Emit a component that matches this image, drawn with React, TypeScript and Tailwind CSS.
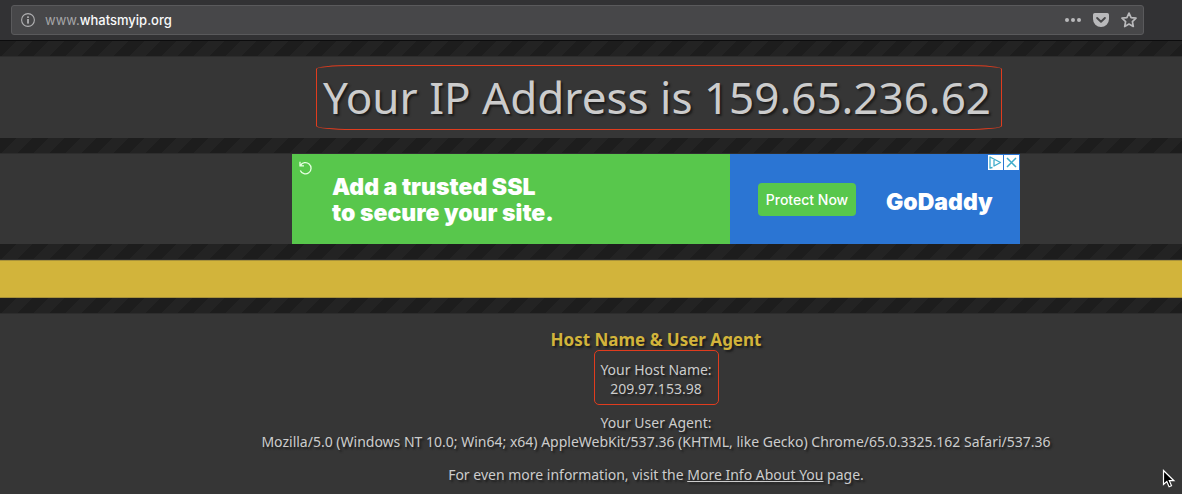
import React from "react";

function StripeBar({ first = false }: { first?: boolean }) {
  return (
    <div
      className={
        "border-b border-[#2d2d2d] bg-[linear-gradient(135deg,#1d1d1d_25%,#232323_25%,#232323_50%,#1d1d1d_50%,#1d1d1d_75%,#232323_75%)] bg-[size:32px_32px] " +
        (first ? "h-[17px] border-t border-t-[#0c0c0d]" : "h-4")
      }
    />
  );
}

function UrlBar() {
  return (
    <header className="h-10 bg-[#323234] pt-[5px] pl-[11px] pr-[38px]">
      <div className="flex h-[30px] items-center rounded-[3px] border border-[#5a5a5c] bg-[#474749] pl-[9px] pr-[6px] font-['Inter','Liberation_Sans',sans-serif]">
        <button aria-label="Site information" className="mr-[10px] block">
          <svg width="14" height="14" viewBox="0 0 14 14" fill="none">
            <circle cx="7" cy="7" r="6.4" stroke="#b1b1b3" strokeWidth="1.1" />
            <rect x="6.1" y="6" width="1.8" height="4.6" fill="#b1b1b3" />
            <rect x="6.1" y="3.3" width="1.8" height="1.8" rx=".5" fill="#b1b1b3" />
          </svg>
        </button>
        <p className="grow text-left text-[13px] text-[#a5a5a7]">
          www.<span className="font-medium text-[#f9f9fa]">whatsmyip.org</span>
        </p>
        <button aria-label="Page actions" className="mr-3 block">
          <svg width="16" height="16" viewBox="0 0 16 16" fill="#b9b9bb">
            <circle cx="2" cy="8" r="2" />
            <circle cx="8" cy="8" r="2" />
            <circle cx="14" cy="8" r="2" />
          </svg>
        </button>
        <button aria-label="Save to Pocket" className="mr-3 block">
          <svg width="16" height="16" viewBox="0 0 16 16">
            <path d="M1.8 1h12.4A1.8 1.8 0 0 1 16 2.8V7A8 8 0 0 1 0 7V2.8A1.8 1.8 0 0 1 1.8 1Z" fill="#b9b9bb" />
            <path d="m4.1 6 3.9 3.7L11.900 6" fill="none" stroke="#474749" strokeWidth="1.9" strokeLinecap="round" strokeLinejoin="round" />
          </svg>
        </button>
        <button aria-label="Bookmark this page" className="block">
          <svg width="16" height="16" viewBox="0 0 16 16" fill="none" stroke="#b9b9bb" strokeWidth="1.7" strokeLinejoin="round">
            <path d="m8 1.100 2.100 4.500 4.900.6-3.600 3.400.9 4.900L8 12.100l-4.300 2.400.9-4.900L1 6.200l4.900-.6Z" />
          </svg>
        </button>
      </div>
    </header>
  );
}

function AdBanner() {
  return (
    <div className="relative flex h-[90px] w-[728px] font-['Inter','Liberation_Sans',sans-serif] text-white [text-shadow:none]">
      <div className="flex w-[438px] items-start bg-[#58c74c]">
        <button aria-label="Replay" className="mt-[7px] ml-[7px] block">
          <svg width="13" height="14" viewBox="0 0 13 14" fill="none" stroke="#e6ffe2" strokeWidth="1.3">
            <path d="M1.500 4.600A5.600 5.600 0 1 1 1.300 9.400M1 .8v4h4" />
          </svg>
        </button>
        <p className="mt-5 ml-5 text-left text-[23px] leading-[26px] font-black whitespace-nowrap">
          Add a trusted SSL
          <br />
          to secure your site.
        </p>
      </div>
      <div className="flex grow items-center bg-[#2b75d3] pl-7">
        <button className="h-[33px] w-[98px] rounded-[4px] bg-[#58c74c] text-[14px] font-medium whitespace-nowrap">
          Protect Now
        </button>
        <p className="mt-[5px] ml-[30px] text-[23px] leading-7 font-black">GoDaddy</p>
      </div>
      <div className="absolute top-px right-px flex gap-px">
        <a href="#adchoices" aria-label="AdChoices" className="block size-[15px] bg-white">
          <svg width="15" height="15" viewBox="0 0 15 15" fill="none" stroke="#3faccb" strokeWidth="1.3" strokeLinejoin="round">
            <path d="M4.500 12.500 2 13V2l10.500 5.500-6.500 3.500V5" />
          </svg>
        </a>
        <button aria-label="Close ad" className="block size-[15px] bg-white">
          <svg width="15" height="15" viewBox="0 0 15 15" fill="none" stroke="#3faccb" strokeWidth="1.5">
            <path d="m3 3 9 9M12 3l-9 9" />
          </svg>
        </button>
      </div>
    </div>
  );
}

export default function App() {
  return (
    <div className="relative min-h-screen overflow-hidden bg-[#363636] text-center font-['Noto_Sans','DejaVu_Sans',sans-serif] text-[14px] leading-[19px] text-[#cccccc]">
      <UrlBar />
      <StripeBar first />
      <main className="[text-shadow:2px_2px_2px_#1c1c1c]">
        <section className="flex h-[81px] items-center justify-center pl-[136px]">
          <h1 className="flex h-[65px] w-[686px] items-center justify-center rounded-[36px/4px] border border-[#e03c1e] pr-1 text-[44px] whitespace-nowrap">
            Your IP Address is 159.65.236.62
          </h1>
        </section>
        <StripeBar />
        <section className="flex justify-center pl-[130px]">
          <AdBanner />
        </section>
        <StripeBar />
        <div className="h-[38px] border-y border-[#a8923a] bg-[#d2b43b]" />
        <StripeBar />
        <section className="flex flex-col items-center pt-4 pl-[130px]">
          <h2 className="text-[17px] leading-5 font-bold text-[#d2b43b]">Host Name &amp; User Agent</h2>
          <p className="flex h-[55px] w-[125px] flex-col justify-center rounded-[5px] border border-[#e03c1e] pt-[3px]">
            <span>Your Host Name:</span>
            <span>209.97.153.98</span>
          </p>
          <p className="mt-2 whitespace-nowrap">
            Your User Agent:
            <br />
            Mozilla/5.0 (Windows NT 10.0; Win64; x64) AppleWebKit/537.36 (KHTML, like Gecko) Chrome/65.0.3325.162 Safari/537.36
          </p>
          <p className="mt-[14px]">
            For even more information, visit the{" "}
            <a href="#more-info" className="underline">More Info About You</a> page.
          </p>
        </section>
      </main>
      <svg className="absolute right-[6px] bottom-[5px]" width="14" height="20" viewBox="0 0 14 20">
        <path d="M1.500 1.500v14l3.300-3 2.300 5.300 2.400-1-2.200-5.100h4.600Z" fill="#000" stroke="#fff" strokeWidth="1.200" />
      </svg>
    </div>
  );
}
